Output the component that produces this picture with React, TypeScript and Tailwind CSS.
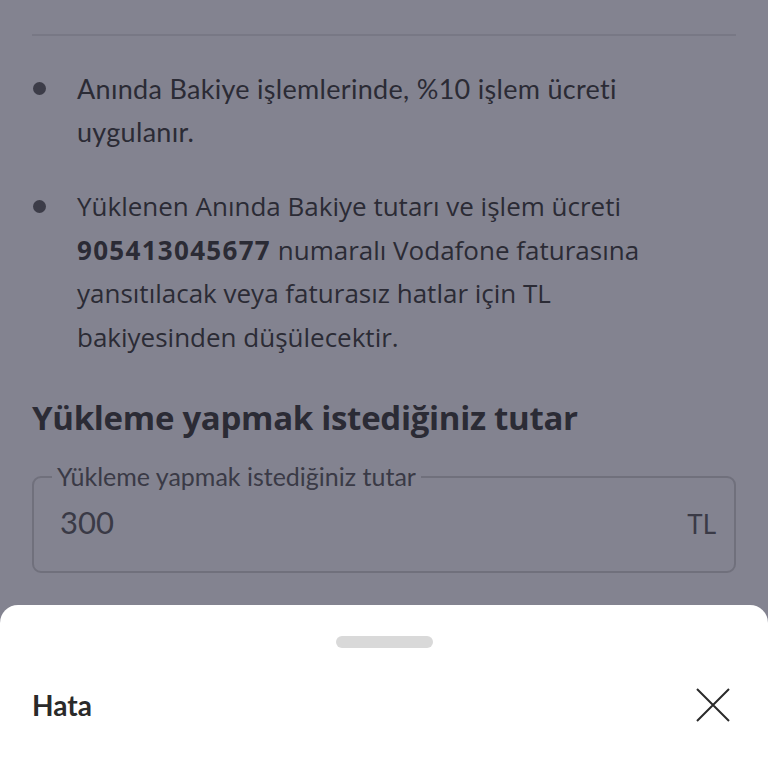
import React from "react";

export default function App() {
  return (
    <div className="relative w-[768px] h-[768px] overflow-hidden bg-[#838390] text-[#2b2b35]" style={{ fontFamily: "'Open Sans', sans-serif" }}>
      <div className="px-8 pt-[34px]">
        <div className="h-[2px] bg-[#787885]" />
        <ul className="mt-[31px] flex flex-col gap-[32px]">
          <li className="flex">
            <span className="w-[45px] shrink-0 pt-[15px] pl-[1px]">
              <span className="block w-[13px] h-[13px] rounded-full bg-[#3c3c48]" />
            </span>
            <p className="text-[27px] leading-[43px] tracking-[0.3px]" style={{ fontFamily: "Lato, sans-serif" }}>
              <span className="block">Anında Bakiye işlemlerinde, %10 işlem ücreti</span>
              <span className="block">uygulanır.</span>
            </p>
          </li>
          <li className="flex">
            <span className="w-[45px] shrink-0 pt-[15px] pl-[1px]">
              <span className="block w-[13px] h-[13px] rounded-full bg-[#3c3c48]" />
            </span>
            <p className="text-[26px] leading-[43.5px]">
              <span className="block">Yüklenen Anında Bakiye tutarı ve işlem ücreti</span>
              <span className="block"><span className="font-bold tracking-[1.3px]">905413045677</span> numaralı Vodafone faturasına</span>
              <span className="block">yansıtılacak veya faturasız hatlar için TL</span>
              <span className="block">bakiyesinden düşülecektir.</span>
            </p>
          </li>
        </ul>
        <h2 className="mt-[39px] text-[33px] font-bold leading-[40px] tracking-[-0.3px]">
          Yükleme yapmak istediğiniz tutar
        </h2>
        <div className="relative mt-[38px] h-[97px] rounded-[9px] border-2 border-[#70707c] flex items-center justify-between pl-[26px] pr-[18px]" style={{ fontFamily: "Lato, sans-serif" }}>
          <span className="absolute -top-[17px] left-[18px] px-[5px] bg-[#838390] text-[25px] leading-[30px] text-[#3a3a46]">
            Yükleme yapmak istediğiniz tutar
          </span>
          <span className="text-[31px] text-[#3a3a46] -mt-[4px]">300</span>
          <span className="text-[26px] text-[#3a3a46]">TL</span>
        </div>
      </div>
      <div className="absolute left-0 right-0 top-[605px] bottom-0 bg-white rounded-t-[18px]">
        <div className="mx-auto mt-[31px] w-[97px] h-[12px] rounded-full bg-[#d9d9d9]" />
        <div className="flex items-center justify-between px-8 mt-[36px]">
          <span className="text-[28px] font-bold text-[#2a2a2a]" style={{ fontFamily: "Lato, sans-serif" }}>Hata</span>
          <svg width="34" height="34" viewBox="0 0 34 34" className="mr-[6px]">
            <path d="M1 1 L33 33 M33 1 L1 33" stroke="#2a2a2a" strokeWidth="2" />
          </svg>
        </div>
      </div>
    </div>
  );
}
